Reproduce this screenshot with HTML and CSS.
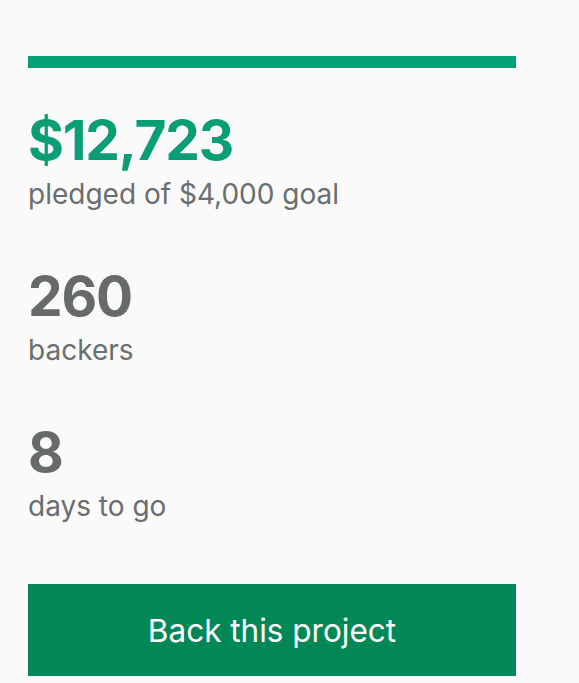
FILE: index.html
```html
<!DOCTYPE html>
<html>
<head>
<meta charset="utf-8">
<link rel="stylesheet" href="styles.css">
</head>
<body>
<main class="stats">
  <div class="progress"><div class="progress-fill"></div></div>
  <div class="stat">
    <div class="stat-value stat-value--accent">$12,723</div>
    <div class="stat-label">pledged of $4,000 goal</div>
  </div>
  <div class="stat">
    <div class="stat-value">260</div>
    <div class="stat-label">backers</div>
  </div>
  <div class="stat">
    <div class="stat-value">8</div>
    <div class="stat-label">days to go</div>
  </div>
  <button class="back-btn" type="button">Back this project</button>
</main>
</body>
</html>
```
FILE: styles.css
```css
html, body {
  margin: 0;
  padding: 0;
  background: #fafafa;
}
body {
  font-family: Inter, "Noto Sans", sans-serif;
}
.stats {
  width: 488px;
  padding: 56px 0 0 28px;
  display: flex;
  flex-direction: column;
}
.progress {
  height: 12px;
  background: #e6e6e6;
}
.progress-fill {
  height: 100%;
  width: 100%;
  background: #03a078;
}
.stat {
  display: flex;
  flex-direction: column;
  gap: 9px;
  margin-top: 45px;
}
.stat + .stat {
  margin-top: 58px;
}
.stat-value {
  font-size: 55px;
  line-height: 55px;
  font-weight: 700;
  color: #666a6b;
  letter-spacing: -1.2px;
}
.stat-value--accent {
  color: #0a9e75;
}
.stat-label {
  font-size: 28px;
  line-height: 34px;
  color: #6a6e6f;
}
.back-btn {
  margin-top: 61px;
  height: 92px;
  border: 0;
  border-radius: 0;
  background: #028856;
  color: #ffffff;
  font-family: Inter, "Noto Sans", sans-serif;
  font-size: 31.5px;
  font-weight: 400;
  padding: 0;
  cursor: pointer;
}
```
